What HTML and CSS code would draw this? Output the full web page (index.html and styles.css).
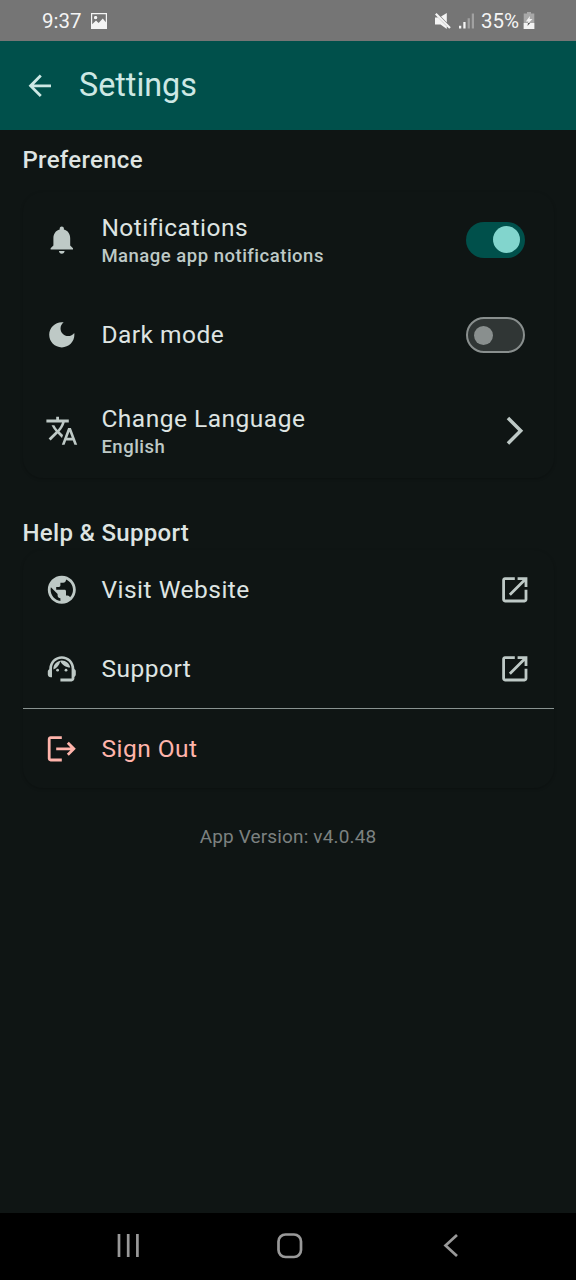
FILE: index.html
```html
<!DOCTYPE html>
<html lang="en">
<head>
<meta charset="utf-8">
<title>Settings</title>
<link rel="stylesheet" href="styles.css">
</head>
<body>
<div class="screen">
  <div class="status">
    <span class="time">9:37</span>
    <svg class="photo" viewBox="0 0 16 16"><path fill-rule="evenodd" d="M0 0h16v16H0zM1.200 1.200v10L5 7.600l2.600 2.300 4.200-4.300 3 3.600v-8zM4.600 3a1.600 1.600 0 1 1 0 3.200 1.600 1.600 0 0 1 0-3.200z"/><circle cx="4.600" cy="4.600" r="1.500"/></svg>
    <span class="grow"></span>
    <svg class="mute" viewBox="0 0 16 16"><path d="M0 4.500h3.200L11.800 13v3L5.500 11.500H0zM6 3.600 11.800 0v9.400zM1.600 0 0 1.600l14.200 14.200 1.600-1.600z"/></svg>
    <svg class="signal" viewBox="0 0 16 16"><path d="M0 13h2.400v3H0zM4.600 9H7v7H4.600z"/><path opacity=".35" d="M9.200 5h2.400v11H9.200zM13.600 0H16v16h-2.400z"/></svg>
    <span class="percent">35%</span>
    <svg class="battery" viewBox="0 0 12 17"><path opacity=".4" d="M4 0h4v1.500h3.300V17H.7V1.500H4z"/><path d="M.7 11h10.600v6H.7z"/><path d="M7 4 2.800 9.500h2.700L4.500 12l5-5H6.600z"/><path fill="#555" d="M5 11h2.200L4.500 14z"/></svg>
  </div>
  <header class="appbar">
    <svg class="icon" viewBox="0 0 24 24"><path d="M20 11H7.830l5.590-5.590L12 4l-8 8 8 8 1.410-1.410L7.830 13H20z"/></svg>
    <h1>Settings</h1>
  </header>
  <main class="content">
    <h2>Preference</h2>
    <section class="card preferences">
      <div class="row">
        <svg class="icon" viewBox="0 0 24 24"><path d="M12 22c1.100 0 2-.9 2-2h-4c0 1.100.89 2 2 2zm6-6v-5c0-3.070-1.640-5.640-4.500-6.320V4c0-.83-.67-1.500-1.500-1.500s-1.500.67-1.500 1.500v.68C7.630 5.360 6 7.920 6 11v5l-2 2v1h16v-1z"/></svg>
        <div class="label"><div class="name">Notifications</div><div class="sub">Manage app notifications</div></div>
        <span class="switch on"></span>
      </div>
      <div class="row">
        <svg class="icon" viewBox="0 0 24 24"><path d="M12 3c-4.970 0-9 4.030-9 9s4.030 9 9 9 9-4.030 9-9c0-.46-.04-.92-.1-1.360-.98 1.370-2.580 2.260-4.400 2.260-2.980 0-5.400-2.420-5.400-5.400 0-1.810.89-3.420 2.260-4.400-.44-.06-.9-.1-1.360-.1z"/></svg>
        <div class="label"><div class="name">Dark mode</div></div>
        <span class="switch"></span>
      </div>
      <div class="row">
        <svg class="icon" viewBox="0 0 24 24"><path d="M12.870 15.070l-2.540-2.510.03-.03c1.740-1.940 2.980-4.170 3.710-6.530H17V4h-7V2H8v2H1v1.990h11.170C11.500 7.920 10.440 9.750 9 11.350 8.070 10.320 7.300 9.190 6.690 8h-2c.73 1.630 1.730 3.170 2.980 4.560l-5.090 5.020L4 19l5-5 3.110 3.110.76-2.040zM18.500 10h-2L12 22h2l1.120-3h4.750L21 22h2l-4.500-12zm-2.620 7l1.620-4.330L19.120 17h-3.240z"/></svg>
        <div class="label"><div class="name">Change Language</div><div class="sub">English</div></div>
        <svg class="icon" viewBox="0 0 24 24"><path d="M6.230 20.230 8 22l10-10L8 2 6.230 3.770 14.460 12z"/></svg>
      </div>
    </section>
    <h2>Help &amp; Support</h2>
    <section class="card support">
      <div class="row">
        <svg class="icon" viewBox="0 0 24 24"><path d="M12 2C6.480 2 2 6.480 2 12s4.480 10 10 10 10-4.480 10-10S17.520 2 12 2zm-1 17.930c-3.950-.49-7-3.850-7-7.930 0-.62.08-1.210.21-1.790L9 15v1c0 1.100.9 2 2 2v1.930zm6.900-2.540c-.26-.81-1-1.390-1.900-1.390h-1v-3c0-.55-.45-1-1-1H8v-2h2c.55 0 1-.45 1-1V7h2c1.100 0 2-.9 2-2v-.41c2.930 1.190 5 4.060 5 7.410 0 2.080-.8 3.970-2.100 5.390z"/></svg>
        <div class="label"><div class="name">Visit Website</div></div>
        <svg class="icon" viewBox="0 0 24 24"><path d="M19 19H5V5h7V3H5c-1.110 0-2 .9-2 2v14c0 1.100.89 2 2 2h14c1.100 0 2-.9 2-2v-7h-2v7zM14 3v2h3.590l-9.830 9.830 1.410 1.410L19 6.410V10h2V3h-7z"/></svg>
      </div>
      <div class="row">
        <svg class="icon" viewBox="0 0 24 24"><path d="M21 12.220C21 6.730 16.740 3 12 3c-4.690 0-9 3.650-9 9.280-.6.34-1 .98-1 1.720v2c0 1.100.9 2 2 2h1v-6.100c0-3.870 3.130-7 7-7s7 3.130 7 7V19h-8v2h8c1.100 0 2-.9 2-2v-1.220c.59-.31 1-.92 1-1.640v-2.300c0-.7-.41-1.310-1-1.620z"/><circle cx="9" cy="13" r="1"/><circle cx="15" cy="13" r="1"/><path d="M18 11.030C17.520 8.180 15.040 6 12.050 6c-3.030 0-6.290 2.510-6.030 6.450 2.470-1.010 4.330-3.210 4.860-5.890 1.310 2.630 4 4.440 7.120 4.470z"/></svg>
        <div class="label"><div class="name">Support</div></div>
        <svg class="icon" viewBox="0 0 24 24"><path d="M19 19H5V5h7V3H5c-1.110 0-2 .9-2 2v14c0 1.100.89 2 2 2h14c1.100 0 2-.9 2-2v-7h-2v7zM14 3v2h3.590l-9.830 9.830 1.410 1.410L19 6.410V10h2V3h-7z"/></svg>
      </div>
      <div class="divider"></div>
      <div class="row signout">
        <svg class="icon" viewBox="0 0 24 24"><path d="M12 3H4c-1.100 0-2 .9-2 2v14c0 1.100.9 2 2 2h8v-2H4V5h8zM17 7l-1.410 1.410L18.170 11H8v2h10.170l-2.580 2.580L17 17l5-5z"/></svg>
        <div class="label"><div class="name">Sign Out</div></div>
      </div>
    </section>
    <p class="version">App Version: v4.0.48</p>
  </main>
  <nav class="navbar">
    <svg viewBox="0 0 28 28"><path d="M5 3v23M14.200 3v23M23.400 3v23"/></svg>
    <svg viewBox="0 0 28 28"><rect x="2.500" y="3.500" width="22.500" height="22.500" rx="7"/></svg>
    <svg viewBox="0 0 28 28"><path d="M20 4 8.500 14.500 20 25"/></svg>
  </nav>
</div>
</body>
</html>
```
FILE: styles.css
```css
* { box-sizing: border-box; }
body { margin: 0; background: #0f1514; font-family: Roboto, "Liberation Sans", sans-serif; }
svg { display: block; flex: none; }
h1, h2, p { margin: 0; }
.screen { display: flex; flex-direction: column; width: 576px; height: 1280px; background: #0f1514; color: #dee4e2; }
.status { display: flex; align-items: center; height: 41px; padding: 0 41px 0 42px; background: #757575; color: #f4f4f4; font-size: 20.5px; }
.status svg { fill: #f4f4f4; }
.time { width: 49px; }
.photo { width: 16px; height: 16px; }
.grow { flex: 1; }
.mute { width: 16px; height: 16px; margin-right: 8px; }
.signal { width: 15px; height: 16px; margin-right: 7px; }
.percent { width: 42px; }
.battery { width: 12px; height: 17px; margin-top: -1px; }
.appbar { display: flex; align-items: center; gap: 22.4px; height: 89px; padding-left: 23px; background: #00504b; color: #cde8e4; }
.appbar .icon { fill: #cde8e4; }
h1 { margin-top: -1px; font-size: 32.3px; font-weight: 400; }
.icon { width: 33.6px; height: 33.6px; fill: #bec9c6; }
.content { flex: 1; padding: 0 22.5px; }
h2 { padding-top: 16px; height: 62px; font-size: 24px; line-height: 28px; font-weight: 500; letter-spacing: .3px; }
.card { border-radius: 20px; box-shadow: 0 1px 3px rgba(0, 0, 0, .25); }
.preferences { margin-bottom: 24.5px; }
.preferences .row { height: 95.4px; }
.row { display: flex; align-items: center; gap: 23.3px; padding: 0 22px; height: 78.7px; }
.label { flex: 1; }
.name { font-size: 24.5px; line-height: 32px; letter-spacing: .5px; }
.sub { font-size: 18.5px; line-height: 24px; font-weight: 500; letter-spacing: .5px; color: #bec9c6; margin: 0 0 -1px; }
.switch { display: flex; align-items: center; width: 59px; height: 36px; margin-right: 7px; padding-left: 6.5px; border: 2.5px solid #898f8e; border-radius: 18px; background: #303635; }
.switch::before { content: ""; width: 19px; height: 19px; border-radius: 50%; background: #898f8e; }
.switch.on { padding-left: 27px; border: 0; background: #00504b; }
.switch.on::before { width: 27px; height: 27px; background: #82d5cd; }
.support { margin-top: -14.2px; }
.divider { height: 1.5px; background: #899391; }
.signout { color: #ffb4ab; }
.signout .icon { fill: #ffb4ab; }
.version { margin-top: 35.5px; text-align: center; font-size: 19px; line-height: 26px; letter-spacing: .15px; color: #7c8180; }
.navbar { display: flex; justify-content: space-between; align-items: center; height: 67px; padding: 0 111px 3px 114px; background: #000; }
.navbar svg { width: 28px; height: 28px; fill: none; stroke: #999; stroke-width: 2.7; }
```
